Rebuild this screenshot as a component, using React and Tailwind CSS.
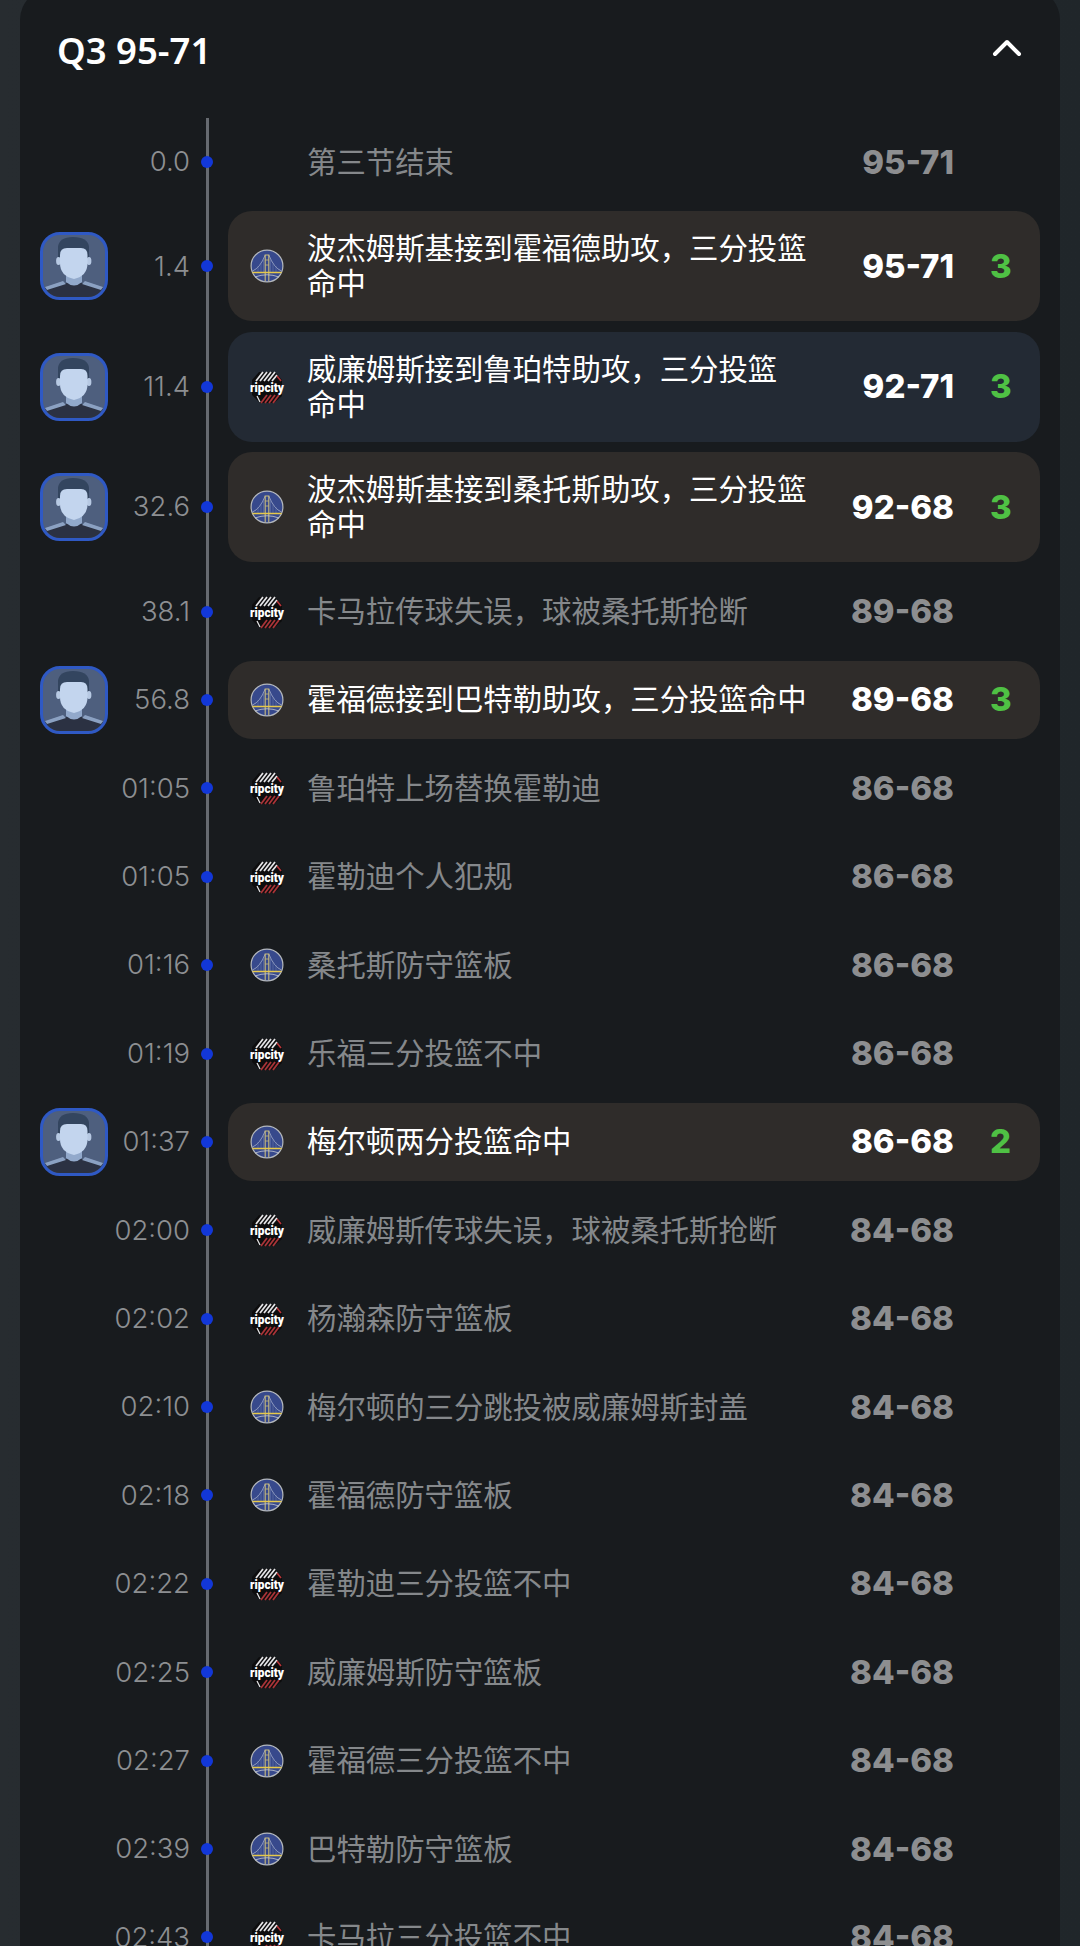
import React from "react";
import { ChevronUp } from "lucide-react";

const GSW = "gsw";
const POR = "por";

const plays = [
  { time: "0.0", text: ["第三节结束"], score: "95-71" },
  { time: "1.4", team: GSW, text: ["波杰姆斯基接到霍福德助攻，三分投篮", "命中"], score: "95-71", pts: 3 },
  { time: "11.4", team: POR, text: ["威廉姆斯接到鲁珀特助攻，三分投篮", "命中"], score: "92-71", pts: 3 },
  { time: "32.6", team: GSW, text: ["波杰姆斯基接到桑托斯助攻，三分投篮", "命中"], score: "92-68", pts: 3 },
  { time: "38.1", team: POR, text: ["卡马拉传球失误，球被桑托斯抢断"], score: "89-68" },
  { time: "56.8", team: GSW, text: ["霍福德接到巴特勒助攻，三分投篮命中"], score: "89-68", pts: 3 },
  { time: "01:05", team: POR, text: ["鲁珀特上场替换霍勒迪"], score: "86-68" },
  { time: "01:05", team: POR, text: ["霍勒迪个人犯规"], score: "86-68" },
  { time: "01:16", team: GSW, text: ["桑托斯防守篮板"], score: "86-68" },
  { time: "01:19", team: POR, text: ["乐福三分投篮不中"], score: "86-68" },
  { time: "01:37", team: GSW, text: ["梅尔顿两分投篮命中"], score: "86-68", pts: 2 },
  { time: "02:00", team: POR, text: ["威廉姆斯传球失误，球被桑托斯抢断"], score: "84-68" },
  { time: "02:02", team: POR, text: ["杨瀚森防守篮板"], score: "84-68" },
  { time: "02:10", team: GSW, text: ["梅尔顿的三分跳投被威廉姆斯封盖"], score: "84-68" },
  { time: "02:18", team: GSW, text: ["霍福德防守篮板"], score: "84-68" },
  { time: "02:22", team: POR, text: ["霍勒迪三分投篮不中"], score: "84-68" },
  { time: "02:25", team: POR, text: ["威廉姆斯防守篮板"], score: "84-68" },
  { time: "02:27", team: GSW, text: ["霍福德三分投篮不中"], score: "84-68" },
  { time: "02:39", team: GSW, text: ["巴特勒防守篮板"], score: "84-68" },
  { time: "02:43", team: POR, text: ["卡马拉三分投篮不中"], score: "84-68" },
];

function WarriorsLogo() {
  return (
    <svg width="34" height="34" viewBox="0 0 34 34" className="shrink-0">
      <circle cx="17" cy="17" r="15.9" fill="#37498c" stroke="#b4b8bd" strokeWidth="1.2" />
      <path d="M2.5 22 Q10 19 15.2 6 M31.5 22 Q24 19 18.8 6" fill="none" stroke="#b3bbd2" strokeWidth="0.7" />
      <path d="M8 23 V17 M11 23 V14.5 M13.5 23 V11 M26 23 V17 M23 23 V14.5 M20.5 23 V11" fill="none" stroke="#6f7eaf" strokeWidth="0.5" />
      <path d="M15.2 32 V6 H18.8 V32" fill="none" stroke="#c8bb7c" strokeWidth="1.1" />
      <path d="M15.2 11 H18.8 M15.2 16 H18.8" stroke="#c8bb7c" strokeWidth="0.8" />
      <path d="M2.5 23.5 H31.5" stroke="#e6c84a" strokeWidth="1.5" />
      <path d="M5 28 Q17 23.5 29 28" fill="none" stroke="#c6cad1" strokeWidth="0.8" />
    </svg>
  );
}

function BlazersLogo() {
  return (
    <svg width="36" height="34" viewBox="0 0 36 34" className="shrink-0 -mx-px overflow-visible">
      <path d="M10 2 H26 L33 10 V26 L25 33 H11 L3 25 V10 Z" fill="#0d0d0e" />
      <path d="M7 11 L14 2 M11 11 L18 2 M15 11 L22 2 M19 11 L26 2 M23 11 L28 5" stroke="#e4e4e6" strokeWidth="1.8" />
      <path d="M28 6 L32 11" stroke="#b8363a" strokeWidth="1.6" />
      <path d="M12 33 L18 25 M16 33 L22 25 M20 33 L26 25 M24 33 L30 25" stroke="#a93438" strokeWidth="1.8" />
      <path d="M8 26 L11 32" stroke="#e4e4e6" strokeWidth="1.2" />
      <text x="18" y="22" textAnchor="middle" fontFamily="Roboto, sans-serif" fontWeight="900" fontSize="13" textLength="34" lengthAdjust="spacingAndGlyphs" fill="#fff">ripcity</text>
    </svg>
  );
}

function Avatar() {
  return (
    <div className="w-[68px] h-[68px] rounded-[20px] border-[3px] border-[#2f59c4] overflow-hidden bg-[#4e5f7e]">
      <svg width="62" height="62" viewBox="0 0 62 62" className="block">
        <path d="M15 24 V12 Q16 2 30 2 Q45 2 46 12 V24 Z" fill="#33455f" />
        <path d="M0 54 L20 48 H42 L62 54 V62 H0 Z" fill="#2b3142" />
        <path d="M2 52 L20 46 L23 49 L4 55 Z M60 52 L42 46 L39 49 L58 55 Z" fill="#8ba1c2" />
        <path d="M23 36 H39 V47 Q31 54 23 47 Z" fill="#92a9cb" />
        <ellipse cx="15.5" cy="26" rx="2.4" ry="4" fill="#b7c9e3" />
        <ellipse cx="46" cy="26" rx="2.4" ry="4" fill="#b7c9e3" />
        <path d="M17 20 Q17 13 24 13 H38 Q44.5 13 44.5 20 V28 Q44.5 41 31 44 Q17 41 17 28 Z" fill="#c3d5ee" />
      </svg>
    </div>
  );
}

function Row({ play }) {
  const { time, team, text, score, pts } = play;
  const highlight = pts != null;
  const rowBg = !highlight ? "" : team === POR ? "bg-[#232a34]" : "bg-[#2f2c2a]";
  return (
    <div className={`flex items-center pl-5 ${text.length > 1 ? "h-[110px]" : "h-[78px]"}`}>
      <div className="w-[68px] shrink-0">{highlight && <Avatar />}</div>
      <div className="w-[82px] shrink-0 text-right font-['Inter',sans-serif] font-light text-[27.5px] leading-none text-[#8d8f92]">{time}</div>
      <div className="relative ml-[11px] w-3 h-3 rounded-full bg-[#1237d8] shrink-0" />
      <div className={`ml-[15px] w-[812px] h-full shrink-0 flex items-center pl-[22px] rounded-[24px] ${rowBg}`}>
        <div className="w-[34px] shrink-0 flex justify-center">
          {team === GSW && <WarriorsLogo />}
          {team === POR && <BlazersLogo />}
        </div>
        <div className={`ml-[23px] w-[520px] shrink-0 text-[29.4px] leading-[35px] whitespace-nowrap ${highlight ? "text-white" : "text-[#85888b]"}`}>
          {text.map((line) => (
            <div key={line}>{line}</div>
          ))}
        </div>
        <div className={`w-[127px] shrink-0 text-right font-['Inter',sans-serif] text-[33px] leading-none font-extrabold ${highlight ? "text-white" : "text-[#8d8e90]"}`}>
          {score}
        </div>
        <div className="ml-[36px] font-['Inter',sans-serif] text-[33px] leading-none font-extrabold text-[#4fc144]">{pts}</div>
      </div>
    </div>
  );
}

export default function App() {
  return (
    <div className="w-[1080px] h-[1946px] overflow-hidden bg-gradient-to-r from-[#272c30] to-[#20262a] font-['Noto_Sans','Noto_Sans_CJK_SC',sans-serif]">
      <div className="mx-5 -mt-3 pt-3 h-[1970px] bg-[#181b1e] rounded-t-[32px]">
        <div className="h-[118px] flex items-start justify-between pl-[37px] pr-[29px] pt-6">
          <div className="mt-2 text-[36.5px] leading-none font-semibold text-white">Q3 95-71</div>
          <ChevronUp size={48} strokeWidth={2} className="text-white" />
        </div>
        <div className="relative flex flex-col gap-[10.4px] pt-[5px]">
          <div className="absolute left-[185.5px] top-0 bottom-0 w-[3px] bg-[#666a70]" />
          {plays.map((play, i) => (
            <Row key={i} play={play} />
          ))}
        </div>
      </div>
    </div>
  );
}
